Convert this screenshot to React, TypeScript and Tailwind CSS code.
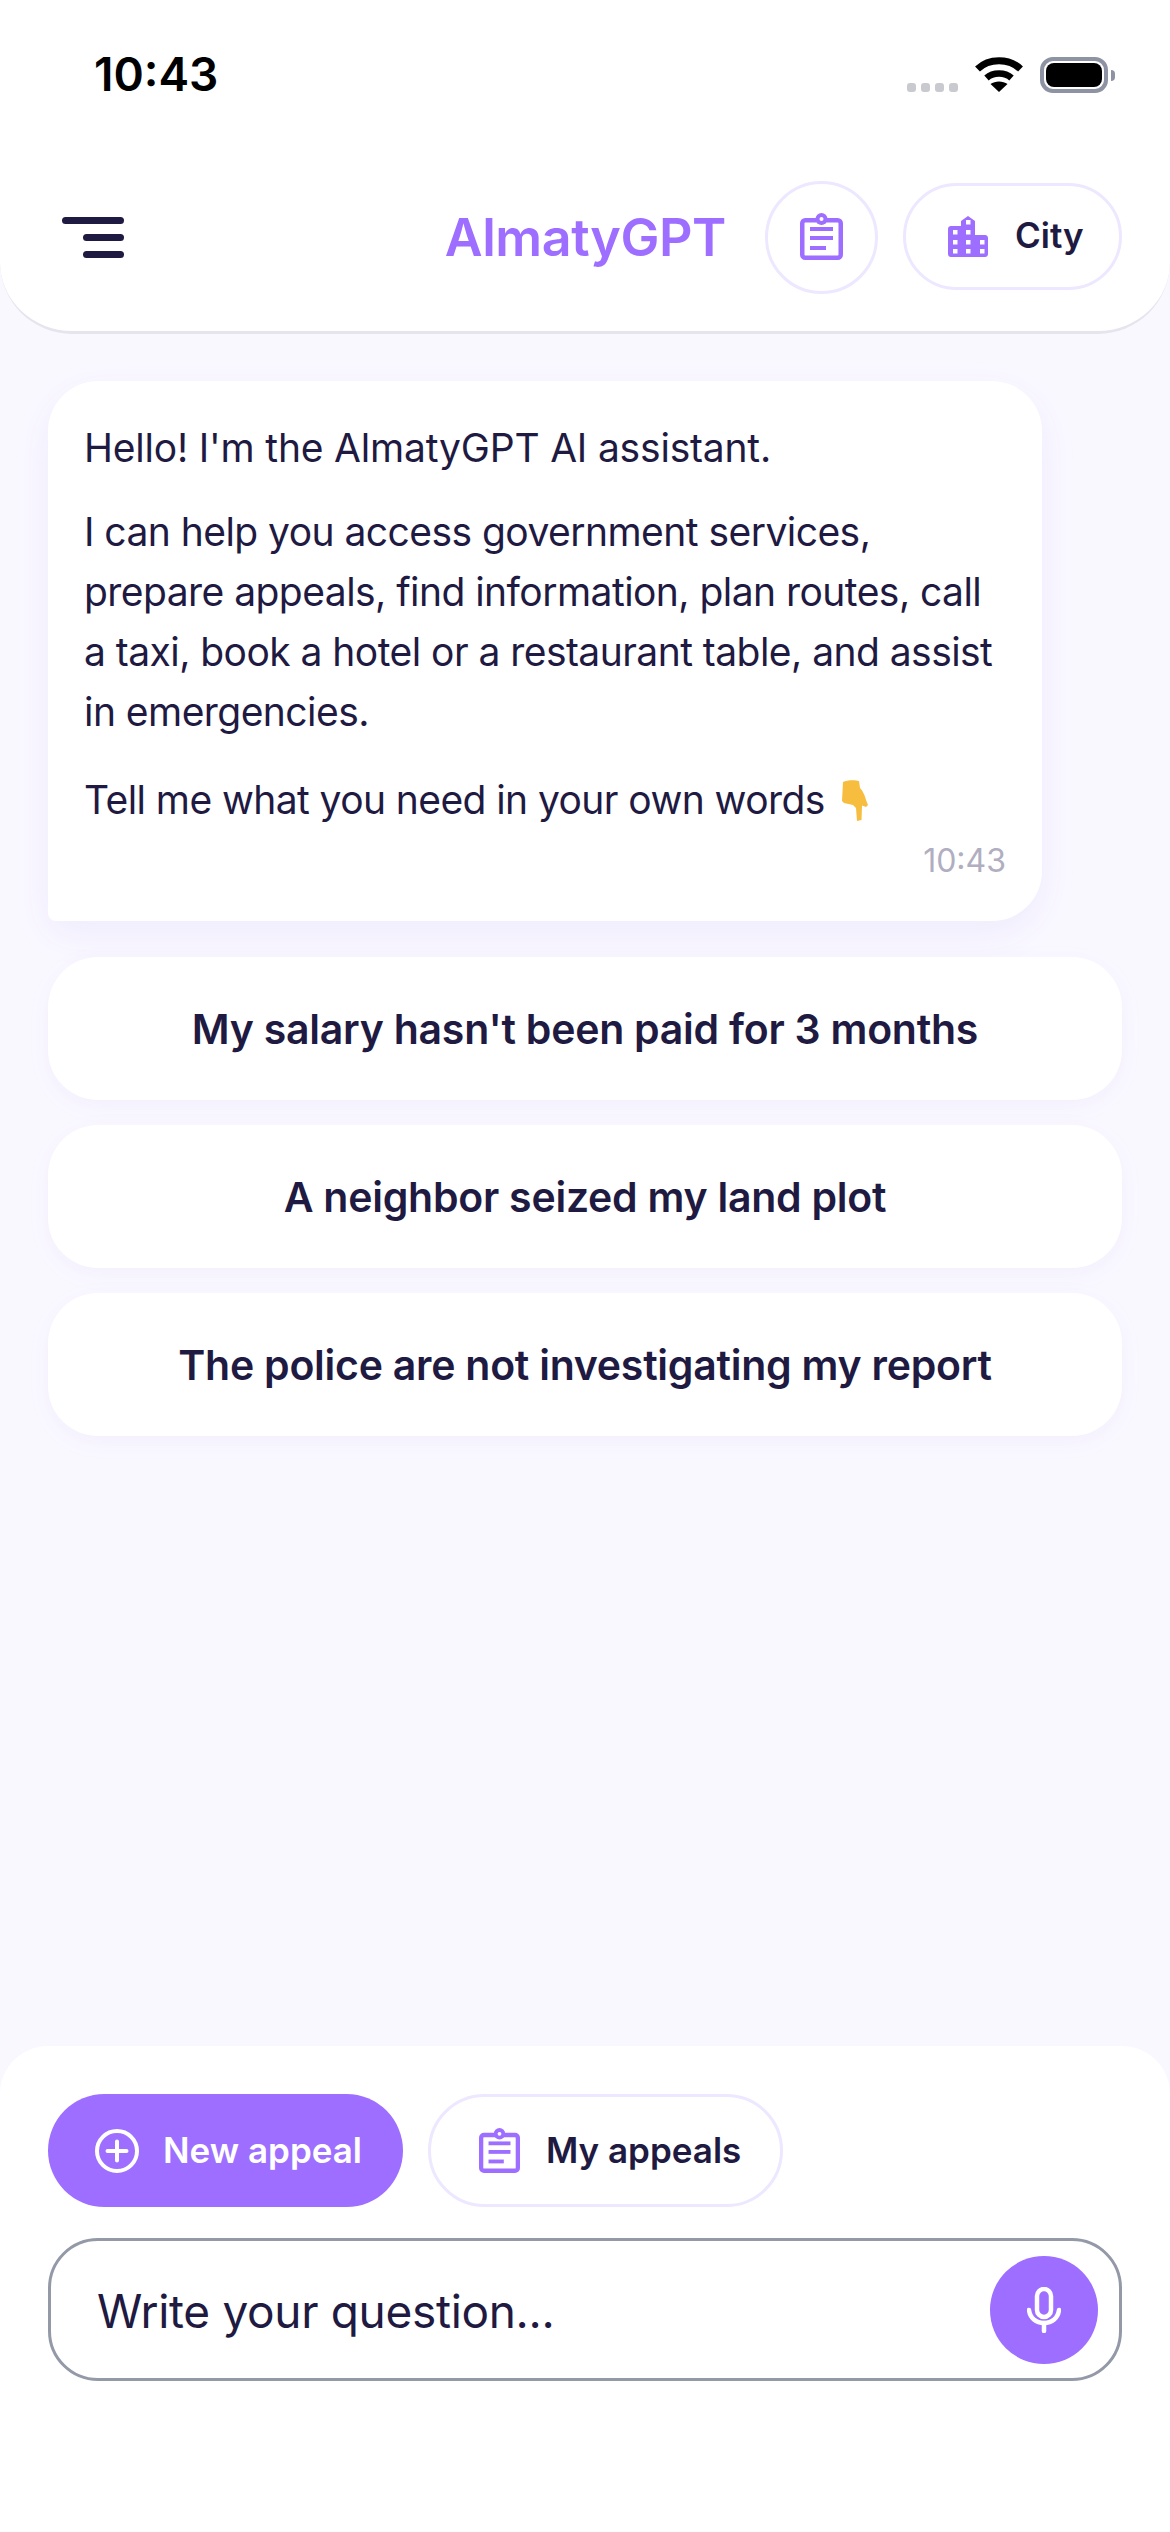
const suggestions = [
  "My salary hasn't been paid for 3 months",
  "A neighbor seized my land plot",
  "The police are not investigating my report",
];

function ClipboardIcon({ className }: { className: string }) {
  return (
    <svg viewBox="0 0 43 47" className={className}>
      <rect x="2.25" y="7.25" width="38.5" height="37.5" rx="3" fill="none" stroke="#9d6eff" strokeWidth="4.5" />
      <circle cx="21.5" cy="6" r="6" fill="#9d6eff" />
      <circle cx="21.5" cy="6" r="2" fill="#fff" />
      <rect x="10" y="14" width="23" height="4" fill="#9d6eff" />
      <rect x="10" y="23" width="23" height="4" fill="#9d6eff" />
      <rect x="10" y="33" width="16" height="4" fill="#9d6eff" />
    </svg>
  );
}

function BuildingIcon() {
  const windows = [
    [18, 4], [5, 14], [18, 14], [5, 24], [18, 24], [32, 24], [5, 33], [18, 33], [32, 33],
  ];
  return (
    <svg viewBox="0 0 40 41" className="w-[40px] h-[41px] shrink-0">
      <path
        d="M20 0L27 5V19H37C38.7 19 40 20.3 40 22V38C40 39.7 38.7 41 37 41H3C1.3 41 0 39.7 0 38V13C0 11.3 1.3 10 3 10H13V5Z"
        fill="#9d6eff"
      />
      {windows.map(([x, y]) => (
        <rect key={`${x}-${y}`} x={x} y={y} width="4.5" height="4.5" fill="#fff" />
      ))}
    </svg>
  );
}

function PlusCircleIcon() {
  return (
    <svg viewBox="0 0 44 44" className="w-[44px] h-[44px] shrink-0" fill="none" stroke="#fff">
      <circle cx="22" cy="22" r="20" strokeWidth="4" />
      <path d="M22 12.5V31.5M12.5 22H31.5" strokeWidth="4" strokeLinecap="round" />
    </svg>
  );
}

function MicIcon() {
  return (
    <svg viewBox="0 0 34 46" className="w-[34px] h-[46px]" fill="none" stroke="#fff" strokeWidth="4.5" strokeLinecap="round">
      <rect x="10" y="2" width="14" height="28" rx="7" />
      <path d="M2 23C3 31 9 36 17 36C25 36 31 31 32 23" />
      <path d="M17 36V44" />
    </svg>
  );
}

function PointDownIcon() {
  return (
    <svg viewBox="0 0 26 41" className="w-[26px] h-[41px] ml-[17px] shrink-0">
      <path
        d="M1 2C5 0 13 0 17 1L18 8C21 11 23 16 24 20L26 25L24 27L20 25.5L19.5 40L15 41L14 28L11 25L2 23L0 21Z"
        fill="#f6bd3e"
      />
    </svg>
  );
}

export default function App() {
  return (
    <div className="w-[1170px] h-[2532px] flex flex-col bg-[#faf8ff] font-['Inter',sans-serif] text-[#1f1a42] overflow-hidden">
      <header className="h-[334px] shrink-0 bg-white rounded-b-[72px] border-b-[3px] border-[#e6e5ee]">
        <div className="h-[181px] pt-[48px] pl-[94px] pr-[55px] flex items-start justify-between">
          <span className="text-[46px] leading-[52px] font-semibold text-black">10:43</span>
          <div className="flex items-end pt-[8px]">
            <div className="flex gap-[5px] mb-[1px]">
              <span className="w-[9px] h-[9px] rounded-[3px] bg-[#c9c9d0]" />
              <span className="w-[9px] h-[9px] rounded-[3px] bg-[#c9c9d0]" />
              <span className="w-[9px] h-[9px] rounded-[3px] bg-[#c9c9d0]" />
              <span className="w-[9px] h-[9px] rounded-[3px] bg-[#c9c9d0]" />
            </div>
            <svg viewBox="0 0 48 36" className="w-[48px] h-[36px] ml-[17px] mb-[1px]">
              <path d="M2.5 13C14 2 34 2 45.5 13" fill="none" stroke="#000" strokeWidth="7" />
              <path d="M11.5 22C18 16 30 16 36.5 22" fill="none" stroke="#000" strokeWidth="6.5" />
              <path d="M15.5 28C20 24.5 28 24.5 32.5 28L24 36Z" fill="#000" />
            </svg>
            <div className="ml-[17px] flex items-center">
              <div className="w-[68px] h-[36px] rounded-[13px] border-[4px] border-[#8e93a3] p-[2px]">
                <div className="w-full h-full rounded-[8px] bg-black" />
              </div>
              <div className="ml-[3px] w-[4px] h-[11px] rounded-r-[4px] bg-[#8e93a3]" />
            </div>
          </div>
        </div>
        <div className="flex items-center pr-[48px]">
          <button className="ml-[62px] w-[62px] flex flex-col items-end gap-[10px]">
            <span className="w-[62px] h-[7px] rounded-full bg-[#1f1a42]" />
            <span className="w-[41px] h-[7px] rounded-full bg-[#1f1a42]" />
            <span className="w-[41px] h-[7px] rounded-full bg-[#1f1a42]" />
          </button>
          <h1 className="ml-auto text-[52px] leading-[60px] font-semibold tracking-[-0.008em] text-[#9d6eff]">AlmatyGPT</h1>
          <button className="ml-[39px] w-[113px] h-[113px] rounded-full border-[3px] border-[#ede7ff] flex items-center justify-center">
            <ClipboardIcon className="w-[43px] h-[47px] mb-[2px]" />
          </button>
          <button className="ml-[25px] mb-[2px] w-[219px] h-[107px] rounded-full border-[3px] border-[#ede7ff] flex items-center pl-[42px] gap-[27px]">
            <BuildingIcon />
            <span className="text-[35px] font-semibold pb-[2px]">City</span>
          </button>
        </div>
      </header>

      <main className="flex-1 px-[48px] pt-[47px]">
        <div className="w-[994px] h-[540px] bg-white rounded-[50px] rounded-bl-[8px] shadow-[0_12px_40px_rgba(90,70,220,0.07)] pl-[36px] pr-[36px] pt-[37px]">
          <p className="text-[39px] leading-[60px] tracking-[-0.005em]">Hello! I'm the AlmatyGPT AI assistant.</p>
          <p className="mt-[24px] text-[39px] leading-[60px] tracking-[-0.014em]">
            I can help you access government services, prepare appeals, find information, plan routes, call a taxi, book a
            hotel or a restaurant table, and assist in emergencies.
          </p>
          <p className="mt-[28px] text-[39px] leading-[60px] tracking-[-0.015em] flex items-center">
            Tell me what you need in your own words
            <PointDownIcon />
          </p>
          <p className="text-right text-[32px] leading-[40px] mt-[11px] text-[#b0aec0]">10:43</p>
        </div>
        <div className="mt-[36px] flex flex-col gap-[25px]">
          {suggestions.map((text) => (
            <button
              key={text}
              className="h-[143px] pt-[2px] bg-white rounded-[50px] shadow-[0_6px_24px_rgba(90,70,220,0.05)] text-[41px] tracking-[-0.006em] font-semibold text-center"
            >
              {text}
            </button>
          ))}
        </div>
      </main>

      <footer className="h-[486px] shrink-0 bg-white rounded-t-[48px] px-[48px] pt-[48px]">
        <div className="flex gap-[25px]">
          <button className="w-[355px] h-[113px] rounded-full bg-[#9d6eff] text-white flex items-center pl-[47px] gap-[24px]">
            <PlusCircleIcon />
            <span className="text-[35px] font-semibold">New appeal</span>
          </button>
          <button className="w-[355px] h-[113px] rounded-full border-[3px] border-[#ede7ff] flex items-center pl-[48px] gap-[26px]">
            <ClipboardIcon className="w-[41px] h-[45px] shrink-0" />
            <span className="text-[35px] font-semibold">My appeals</span>
          </button>
        </div>
        <div className="mt-[31px] h-[143px] rounded-[50px] border-[3px] border-[#9499a8] flex items-center pl-[46px] pr-[21px] justify-between">
          <span className="text-[46px] tracking-[-0.007em] pt-[4px]">Write your question...</span>
          <button className="w-[108px] h-[108px] rounded-full bg-[#9d6eff] flex items-center justify-center">
            <MicIcon />
          </button>
        </div>
      </footer>
    </div>
  );
}
